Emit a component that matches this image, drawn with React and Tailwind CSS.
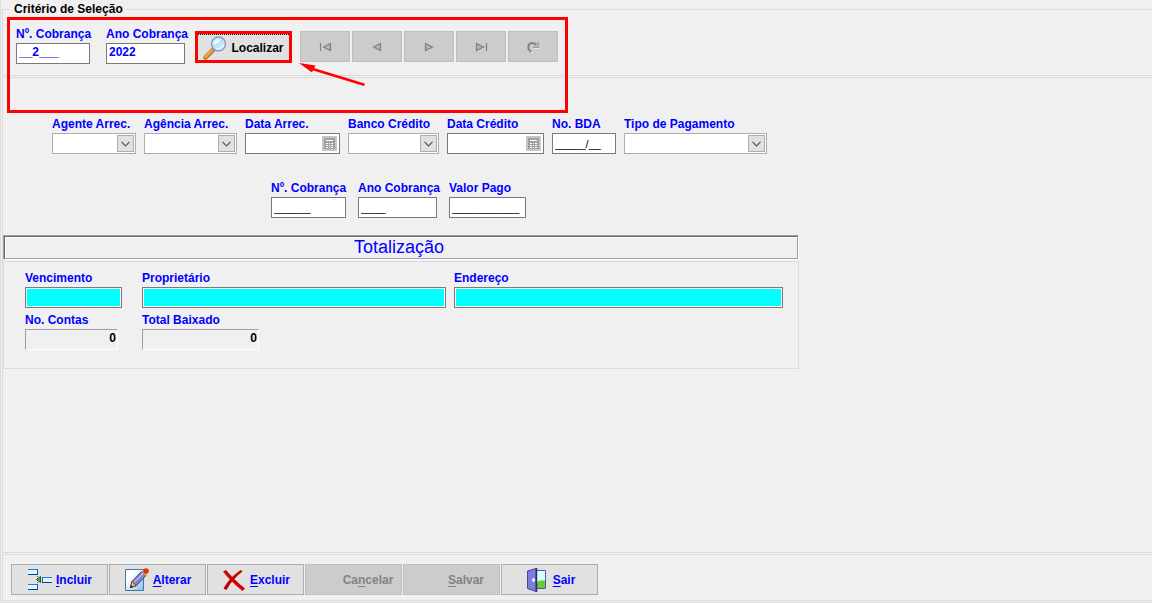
import React from 'react';

const inputBase = 'block h-[21px] w-full min-w-0 border border-[#7a7a7a] px-0.5 outline-none';

function Field({ id, label, className, children }) {
  return (
    <div className={`flex flex-col gap-px ${className}`}>
      <label htmlFor={id} className="whitespace-nowrap font-bold leading-4 text-[#0000ff]">
        {label}
      </label>
      {children}
    </div>
  );
}

function MaskedInput({ id, value }) {
  return <input id={id} type="text" defaultValue={value} className={`${inputBase} bg-white text-[11px] text-black`} />;
}

function ComboBox({ id }) {
  return (
    <div className="relative">
      <select id={id} className="block h-[21px] w-full appearance-none border border-[#adadad] bg-white outline-none">
        <option value=""></option>
      </select>
      <span className="pointer-events-none absolute inset-y-0.5 right-0.5 flex w-[17px] items-center justify-center border border-[#adadad] bg-[#e1e1e1]">
        <svg width="9" height="6" viewBox="0 0 9 6" fill="none" stroke="#555" strokeWidth="1.2">
          <path d="M0.5 0.8 4.5 4.8 8.5 0.8" />
        </svg>
      </span>
    </div>
  );
}

function DateInput({ id }) {
  return (
    <div className="flex h-[21px] items-center border border-[#7a7a7a] bg-white pr-0.5">
      <input id={id} type="text" className="h-full w-full min-w-0 px-0.5 outline-none" />
      <button type="button" aria-label="Calendário" className="shrink-0">
        <svg className="block" width="15" height="15" viewBox="0 0 15 15" shapeRendering="crispEdges">
          <path fill="#c6c6c6" d="M0 0h15v15H0z" />
          <path fill="#a0a0a0" d="M2 2h11v11H2z" />
          <path fill="#fff" d="M4 4h7v1H4zM4 7h2v1H4zM7 7h1v1H7zM9 7h2v1H9zM4 9h2v1H4zM7 9h1v1H7zM9 9h2v1H9zM4 11h2v1H4zM7 11h1v1H7zM9 11h2v1H9z" />
        </svg>
      </button>
    </div>
  );
}

function ReadOnly({ id }) {
  return <input id={id} type="text" readOnly className={`${inputBase} bg-[#00ffff] shadow-[inset_0_0_0_1px_#fff]`} />;
}

function Total({ id }) {
  return (
    <input
      id={id}
      type="text"
      readOnly
      value="0"
      className="block h-[21px] w-full border border-b-white border-l-[#a0a0a0] border-r-white border-t-[#a0a0a0] pb-1 pr-px text-right font-bold text-black outline-none"
    />
  );
}

const navIcons = [
  { name: 'Primeiro', shape: <path d="M3.5 4v8M13.5 4.5v7L6.5 8z" /> },
  { name: 'Anterior', shape: <path d="M11.5 4.5v7L4.5 8z" /> },
  { name: 'Próximo', shape: <path d="M4.5 4.5v7L11.5 8z" /> },
  { name: 'Último', shape: <path d="M13.5 4v8M3.5 4.5v7L10.5 8z" /> },
  {
    name: 'Atualizar',
    shape: (
      <>
        <path fill="none" stroke="#ececec" strokeWidth="1" d="M8 14C6 13.500 5.500 12 6 9.500M9 9.500h5.500" />
        <path fill="none" strokeWidth="2" d="M6.500 12.500C2 11 2.500 4 7.500 4c2 0 3 1 3.500 2.500" />
        <path strokeWidth="0.500" d="M8 8.500h5.500V3z" />
      </>
    ),
  },
];

function NavButton({ name, shape }) {
  return (
    <button
      type="button"
      disabled
      aria-label={name}
      className="flex h-[31px] w-[50px] items-center justify-center border border-[#bfbfbf] bg-[#cccccc]"
    >
      <svg width="16" height="16" viewBox="0 0 16 16" fill="#b4b4b4" stroke="#808080" strokeWidth="1.2">
        {shape}
      </svg>
    </button>
  );
}

function SearchIcon() {
  return (
    <svg width="24" height="24" viewBox="0 0 24 24">
      <path d="M2.500 21.500 10 14" stroke="#a96a20" strokeWidth="4.500" strokeLinecap="round" />
      <path d="M2.500 21 9.500 14" stroke="#f6a13a" strokeWidth="2.800" strokeLinecap="round" />
      <path d="M9.500 14.500 11.500 12.500" stroke="#8790a8" strokeWidth="2.500" />
      <circle cx="15.500" cy="8" r="7" fill="#bfe6f8" stroke="#8b9cc9" strokeWidth="1.500" />
      <path d="M10.500 8a5 5 0 0 1 5-5c3 0 1 5-5 5z" fill="#f2fcff" />
      <path d="M13 12.500c4 1 7-1 7.500-4" stroke="#e3f7ff" strokeWidth="1.500" fill="none" />
    </svg>
  );
}

function InsertIcon() {
  return (
    <svg width="24" height="24" viewBox="0 0 24 24" fill="none" strokeWidth="1">
      <path d="M0 1h10v6H0zM0 16h10v6H0zM14 9h10v6H14z" fill="#e4f1ff" />
      <path d="M0 1.500h9.500M0 16.500h9.500M14.500 9.500H24" stroke="#1584e0" />
      <path d="M9.500 1v6M9.500 16v6M14.500 9v5.500" stroke="#0a62c0" />
      <path d="M0 6.500h10M0 21.500h10M14 14.500h10" stroke="#063f86" />
      <path d="M9.500 8v8" stroke="#555" strokeDasharray="1 1" />
      <path d="M12.500 8.500v6L8.500 11.500z" fill="#4caf50" stroke="#1d5c1d" />
    </svg>
  );
}

function EditIcon() {
  return (
    <svg width="24" height="24" viewBox="0 0 24 24">
      <defs>
        <linearGradient id="paper" x1="0" y1="0" x2="1" y2="1">
          <stop offset="0.3" stopColor="#ffffff" />
          <stop offset="1" stopColor="#7cc0f5" />
        </linearGradient>
      </defs>
      <path d="M0.500 1.500h18v21h-18z" fill="url(#paper)" stroke="#3f76a8" />
      <path d="M5.500 19.500 7 13.500 16.500 3.500 21 7.500 11.500 17.500z" fill="#8481cf" stroke="#45447c" />
      <path d="M9 14.500 18.500 5" stroke="#b7b4ef" strokeWidth="1.500" />
      <path d="M5.500 19.500 7 13.500 11.500 17.500z" fill="#f0c16c" stroke="#604520" />
      <path d="M5 20 6 17.500 8 19z" fill="#222" />
      <path d="M16.500 3.500 18 2l4.500 4.500L21 8z" fill="#f2ad23" />
      <circle cx="21" cy="3" r="2.800" fill="#d83418" />
    </svg>
  );
}

function DeleteIcon() {
  return (
    <svg width="24" height="24" viewBox="0 0 24 24">
      <path d="M1 3.500 4 2C9 8 15 14 23 20.500L20.500 23C13 17 6 10 1 3.500z" fill="#d80000" />
      <path d="M18.500 2 20.500 3.500C14 8 9 14 4.500 22L1.500 20.500C6 12 12 7 18.500 2z" fill="#c00000" />
    </svg>
  );
}

function ExitIcon() {
  return (
    <svg width="20" height="24" viewBox="0 0 20 24">
      <path d="M9 2.500h9.500v18H9z" fill="#d8ffff" stroke="#5656a0" />
      <path d="M10 14l3-1.500h5V20h-8z" fill="#66cc33" />
      <path d="M0.500 3 9 0.500v23L0.500 20.500z" fill="#7d7de0" stroke="#4545a0" />
      <path d="M9.500 0v24" stroke="#303066" strokeWidth="1.500" />
      <path d="M6.500 10v4M5 12h3" stroke="#fff" strokeWidth="1.500" />
    </svg>
  );
}

function ActionButton({ before = '', hotkey, after, icon, disabled }) {
  return (
    <button
      type="button"
      disabled={disabled}
      className={`flex h-[31px] w-[97px] items-center justify-center gap-1 border pl-px font-bold ${
        disabled ? 'border-[#bfbfbf] bg-[#cccccc] text-[#838383]' : 'border-[#adadad] bg-[#e1e1e1] text-[#0000ff]'
      }`}
    >
      <span className="flex w-6 justify-center">{icon}</span>
      <span>
        {before}
        <span className="underline underline-offset-2">{hotkey}</span>
        {after}
      </span>
    </button>
  );
}

function App() {
  return (
    <div className="relative flex min-h-screen flex-col gap-px overflow-hidden border-b border-l border-[#dcdcdc] bg-[#f0f0f0] pb-px pl-px font-['Liberation_Sans',Arial,sans-serif] text-[12px]">
      <fieldset className="min-w-0 border border-r-0 border-[#dcdcdc] pb-[11px] pl-[13px] pt-[7px]">
        <legend className="-ml-1.5 px-1 font-bold leading-[19px] text-black">Critério de Seleção</legend>
        <div className="flex items-start">
          <Field id="numero" label="Nº. Cobrança" className="mr-4 w-[74px]">
            <input id="numero" type="text" defaultValue="__2___" className={`${inputBase} bg-white pb-1 font-bold text-[#0000ff]`} />
          </Field>
          <Field id="ano" label="Ano Cobrança" className="mr-2.5 w-[79px]">
            <input id="ano" type="text" defaultValue="2022" className={`${inputBase} bg-white pb-1 font-bold text-[#0000ff]`} />
          </Field>
          <button
            type="button"
            className="mr-2 mt-[5px] flex h-8 w-[97px] border-[3px] border-[#ff0000] bg-[#e1e1e1] font-bold text-black"
          >
            <span className="flex h-full w-full items-center justify-center gap-1 border-t border-dotted border-black">
              <SearchIcon />
              Localizar
            </span>
          </button>
          <div className="mt-[5px] flex gap-0.5">
            {navIcons.map((item) => (
              <NavButton key={item.name} name={item.name} shape={item.shape} />
            ))}
          </div>
        </div>
      </fieldset>

      <main className="flex-1 border-y border-l border-[#dcdcdc] pt-[38px]">
        <div className="flex gap-2 pl-[49px]">
          <Field id="agente" label="Agente Arrec." className="w-[84px]">
            <ComboBox id="agente" />
          </Field>
          <Field id="agencia" label="Agência Arrec." className="w-[93px]">
            <ComboBox id="agencia" />
          </Field>
          <Field id="dataArrec" label="Data Arrec." className="w-[95px]">
            <DateInput id="dataArrec" />
          </Field>
          <Field id="banco" label="Banco Crédito" className="w-[91px]">
            <ComboBox id="banco" />
          </Field>
          <Field id="dataCredito" label="Data Crédito" className="w-[97px]">
            <DateInput id="dataCredito" />
          </Field>
          <Field id="bda" label="No. BDA" className="w-16">
            <MaskedInput id="bda" value="_____/__" />
          </Field>
          <Field id="tipo" label="Tipo de Pagamento" className="w-[143px]">
            <ComboBox id="tipo" />
          </Field>
        </div>

        <div className="mt-[26px] flex gap-3 pl-[268px]">
          <Field id="numeroPago" label="Nº. Cobrança" className="w-[75px]">
            <MaskedInput id="numeroPago" value="______" />
          </Field>
          <Field id="anoPago" label="Ano Cobrança" className="w-[79px]">
            <MaskedInput id="anoPago" value="____" />
          </Field>
          <Field id="valorPago" label="Valor Pago" className="w-[77px]">
            <MaskedInput id="valorPago" value="___________" />
          </Field>
        </div>

        <section className="mt-[17px] max-w-[796px]">
          <div className="border border-b-white border-l-[#a0a0a0] border-r-white border-t-[#a0a0a0]">
            <h2 className="border border-b-[#a0a0a0] border-l-[#696969] border-r-[#a0a0a0] border-t-[#696969] pr-1 text-center text-[18px] leading-[21px] text-[#0000ff] shadow-[inset_1px_1px_0_#fff]">
              Totalização
            </h2>
          </div>

          <div className="mt-px border border-[#dcdcdc] pb-[18px] pl-[21px] pr-[15px] pt-2">
            <div className="flex">
              <Field id="vencimento" label="Vencimento" className="mr-5 w-[97px]">
                <ReadOnly id="vencimento" />
              </Field>
              <Field id="proprietario" label="Proprietário" className="mr-2 w-[304px]">
                <ReadOnly id="proprietario" />
              </Field>
              <Field id="endereco" label="Endereço" className="flex-1">
                <ReadOnly id="endereco" />
              </Field>
            </div>
            <div className="mt-1 flex gap-6">
              <Field id="contas" label="No. Contas" className="w-[93px]">
                <Total id="contas" />
              </Field>
              <Field id="baixado" label="Total Baixado" className="w-[117px]">
                <Total id="baixado" />
              </Field>
            </div>
          </div>
        </section>
      </main>

      <footer className="flex gap-px border-y border-l border-[#dcdcdc] pb-[5px] pl-2 pt-[9px]">
        <ActionButton hotkey="I" after="ncluir" icon={<InsertIcon />} />
        <ActionButton hotkey="A" after="lterar" icon={<EditIcon />} />
        <ActionButton hotkey="E" after="xcluir" icon={<DeleteIcon />} />
        <ActionButton before="Ca" hotkey="n" after="celar" disabled />
        <ActionButton hotkey="S" after="alvar" disabled />
        <ActionButton hotkey="S" after="air" icon={<ExitIcon />} />
      </footer>

      {/* destaque da área de busca */}
      <div className="pointer-events-none absolute left-1.5 top-[17px] h-24 w-[561px] border-[3px] border-[#ff0000]" />
      <svg className="pointer-events-none absolute left-[298px] top-[62px]" width="68" height="26" viewBox="0 0 68 26">
        <path d="M12 6.500 64.500 22.500" stroke="#ff0000" strokeWidth="2.500" strokeLinecap="round" />
        <path d="M0 1 16.500 3.500 13 10.500z" fill="#ff0000" />
      </svg>
    </div>
  );
}

export default App;
